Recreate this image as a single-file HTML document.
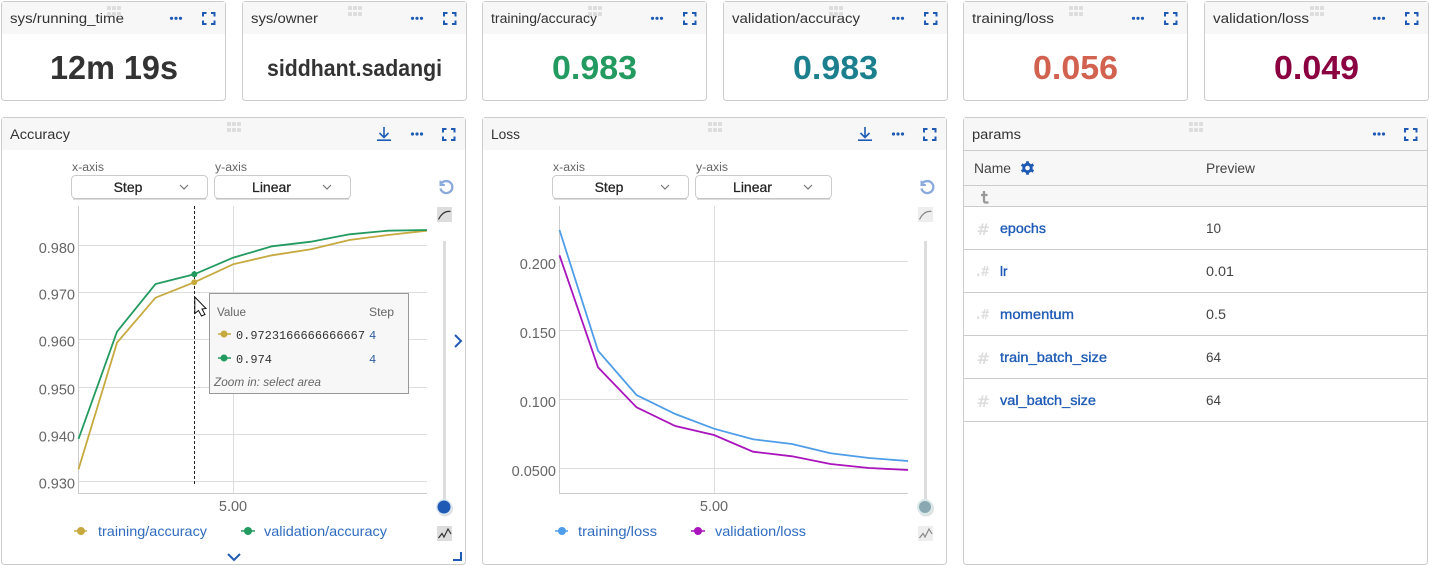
<!DOCTYPE html>
<html lang="en">
<head>
<meta charset="utf-8">
<title>Dashboard</title>
<style>
html,body{margin:0;padding:0;background:#fff;width:1429px;height:566px;overflow:hidden}
svg{display:block}
text{font-family:"Liberation Sans",sans-serif}
.t{font-size:13.5px;fill:#333}
.v{font-size:33px;font-weight:700;text-anchor:middle}
.lab{font-size:11.5px;fill:#666}
.dd{font-size:14px;fill:#222;stroke:#222;stroke-width:.25px;text-anchor:middle}
.ax{font-size:14.5px;fill:#666;text-anchor:end}
.axm{font-size:14.5px;fill:#666;text-anchor:middle}
.leg{font-size:14px;fill:#2f6cc0}
.nm{font-size:13.5px;fill:#1f5bb5;stroke:#1f5bb5;stroke-width:.35px}
.pv{font-size:13.5px;fill:#444}
.hs{font-family:"DejaVu Sans",sans-serif;font-size:16px;font-weight:700;fill:#ddd}
.hd2{font-family:"DejaVu Sans",sans-serif;font-size:13px;font-weight:700;fill:#ddd}
.tt{font-size:11.5px;fill:#666}
.mono{font-family:"Liberation Mono",monospace;font-size:12px;fill:#333}
.card{fill:#fff;stroke:#ccc;stroke-width:1}
.hd{fill:#f7f7f7}
.g{stroke:#ddd;stroke-width:1;fill:none}
.a{stroke:#ccc;stroke-width:1;fill:none}
</style>
</head>
<body>
<svg width="1429" height="566" viewBox="0 0 1429 566" xmlns="http://www.w3.org/2000/svg">
<defs>
<g id="h"><g fill="#ddd"><rect x="0" y="0" width="4" height="4" rx=".8"/><rect x="5" y="0" width="4" height="4" rx=".8"/><rect x="10" y="0" width="4" height="4" rx=".8"/><rect x="0" y="6" width="4" height="4" rx=".8"/><rect x="5" y="6" width="4" height="4" rx=".8"/><rect x="10" y="6" width="4" height="4" rx=".8"/></g></g>
<g id="d"><circle cx="1.5" cy="0" r="1.6" fill="#1f5bb5"/><circle cx="6" cy="0" r="1.6" fill="#1f5bb5"/><circle cx="10.5" cy="0" r="1.6" fill="#1f5bb5"/></g>
<path id="f" d="M1 4.5V1H4.5M9 1H12.5V4.5M12.5 8.5V12H9M4.5 12H1V8.5" fill="none" stroke="#1f5bb5" stroke-width="2"/>
<g id="dl" fill="none" stroke="#1f5bb5" stroke-width="1.6"><path d="M7 0V10M2.5 6L7 10.5L11.5 6"/><path d="M0 13.2H14"/></g>
<path id="cv" d="M0 0L4 4L8 0" fill="none" stroke="#777" stroke-width="1.2"/>
<g id="rs" fill="none" stroke="#8aa9dc" stroke-width="2.3"><path d="M2.5 3.5A6 6 0 1 1 1.5 8.5"/><path d="M1.5 0.8V5H5.8" stroke-width="2"/></g>
</defs>

<!-- small cards -->
<g>
<rect class="card" x="1.5" y="1.5" width="224" height="99" rx="3"/><path class="hd" d="M2 2H225V34H2Z"/>
<text class="t" x="10" y="23" textLength="114" lengthAdjust="spacingAndGlyphs">sys/running_time</text>
<use href="#h" x="107" y="6"/><use href="#d" x="170" y="18.3"/><use href="#f" x="202" y="12"/>
<text class="v" x="114" y="79" fill="#333" textLength="128" lengthAdjust="spacingAndGlyphs">12m 19s</text>
</g>
<g>
<rect class="card" x="242.5" y="1.5" width="224" height="99" rx="3"/><path class="hd" d="M243 2H466V34H243Z"/>
<text class="t" x="251" y="23" textLength="67" lengthAdjust="spacingAndGlyphs">sys/owner</text>
<use href="#h" x="348" y="6"/><use href="#d" x="411" y="18.3"/><use href="#f" x="443" y="12"/>
<text x="354.500" y="76" text-anchor="middle" font-size="23" font-weight="700" fill="#333" textLength="175" lengthAdjust="spacingAndGlyphs">siddhant.sadangi</text>
</g>
<g>
<rect class="card" x="482.500" y="1.5" width="224" height="99" rx="3"/><path class="hd" d="M483 2H706V34H483Z"/>
<text class="t" x="491" y="23" textLength="106" lengthAdjust="spacingAndGlyphs">training/accuracy</text>
<use href="#h" x="588" y="6"/><use href="#d" x="651" y="18.3"/><use href="#f" x="683" y="12"/>
<text class="v" x="594.500" y="79" fill="#239a5f" textLength="85" lengthAdjust="spacingAndGlyphs">0.983</text>
</g>
<g>
<rect class="card" x="723.500" y="1.5" width="224" height="99" rx="3"/><path class="hd" d="M724 2H947V34H724Z"/>
<text class="t" x="732" y="23" textLength="128" lengthAdjust="spacingAndGlyphs">validation/accuracy</text>
<use href="#h" x="829" y="6"/><use href="#d" x="892" y="18.3"/><use href="#f" x="924" y="12"/>
<text class="v" x="835.500" y="79" fill="#1b7f8e" textLength="85" lengthAdjust="spacingAndGlyphs">0.983</text>
</g>
<g>
<rect class="card" x="963.500" y="1.5" width="224" height="99" rx="3"/><path class="hd" d="M964 2H1187V34H964Z"/>
<text class="t" x="972" y="23" textLength="82" lengthAdjust="spacingAndGlyphs">training/loss</text>
<use href="#h" x="1069" y="6"/><use href="#d" x="1132" y="18.3"/><use href="#f" x="1164" y="12"/>
<text class="v" x="1075.500" y="79" fill="#d2624f" textLength="85" lengthAdjust="spacingAndGlyphs">0.056</text>
</g>
<g>
<rect class="card" x="1204.500" y="1.5" width="224" height="99" rx="3"/><path class="hd" d="M1205 2H1428V34H1205Z"/>
<text class="t" x="1213" y="23" textLength="96" lengthAdjust="spacingAndGlyphs">validation/loss</text>
<use href="#h" x="1310" y="6"/><use href="#d" x="1373" y="18.3"/><use href="#f" x="1405" y="12"/>
<text class="v" x="1316.500" y="79" fill="#8b0040" textLength="85" lengthAdjust="spacingAndGlyphs">0.049</text>
</g>

<!-- Accuracy -->
<g>
<rect class="card" x="1.5" y="117.5" width="464" height="447" rx="3"/><path class="hd" d="M2 118H465V150H2Z"/>
<text class="t" x="10" y="139" textLength="60" lengthAdjust="spacingAndGlyphs">Accuracy</text>
<use href="#h" x="227" y="122"/><use href="#dl" x="377" y="127"/><use href="#d" x="411" y="134"/><use href="#f" x="442" y="128"/>
<text class="lab" x="72" y="171" textLength="32" lengthAdjust="spacingAndGlyphs">x-axis</text>
<text class="lab" x="215" y="171" textLength="32" lengthAdjust="spacingAndGlyphs">y-axis</text>
<rect x="71.500" y="175.500" width="136" height="23" rx="4" fill="#fff" stroke="#ccc"/><path d="M73 199H206" stroke="#bbb"/>
<rect x="214.500" y="175.500" width="136" height="23" rx="4" fill="#fff" stroke="#ccc"/><path d="M216 199H349" stroke="#bbb"/>
<text class="dd" x="128" y="192">Step</text><text class="dd" x="271.500" y="192">Linear</text>
<use href="#cv" x="180" y="185"/><use href="#cv" x="323" y="185"/>
<use href="#rs" x="439" y="180"/>
<rect x="437" y="207" width="15" height="15" fill="#ddd"/><path d="M438.500 219.500Q443 210.500 450.500 211.500" fill="none" stroke="#333" stroke-width="1.2"/>
<rect x="443" y="241" width="3" height="266" fill="#ddd"/>
<circle cx="445" cy="508.500" r="8" fill="#ccc" opacity=".6"/><circle cx="444" cy="507" r="8" fill="#dbe8f3"/><circle cx="444" cy="507" r="6.500" fill="#1f5bb5"/>
<rect x="437" y="526" width="15" height="15" fill="#ddd"/><path d="M438.500 538L442 533.500L444 537L448 529L451 534" fill="none" stroke="#333" stroke-width="1.2"/>
<path d="M455 335L461 341L455 347" fill="none" stroke="#1f5bb5" stroke-width="2"/>
<path d="M228 554L234 560L240 554" fill="none" stroke="#1f5bb5" stroke-width="2"/>
<path d="M453 560H461V552" fill="none" stroke="#1f5bb5" stroke-width="2"/>
<path class="g" d="M78.500 245.500H427M78.500 292.500H427M78.500 339.500H427M78.500 387.500H427M78.500 434.500H427M78.500 481.500H427M233.500 206V493"/>
<path class="a" d="M78.500 206V493.500H427"/>
<text class="ax" x="75" y="253">0.980</text><text class="ax" x="75" y="299.500">0.970</text><text class="ax" x="75" y="346.500">0.960</text><text class="ax" x="75" y="394.500">0.950</text><text class="ax" x="75" y="441.500">0.940</text><text class="ax" x="75" y="488.500">0.930</text>
<text class="axm" x="233" y="511">5.00</text>
<path d="M194.500 206V486" stroke="#222" stroke-width="1" stroke-dasharray="3 2" fill="none"/>
<polyline fill="none" stroke="#c6a93f" stroke-width="1.800" points="78.500,469.300 117,342.700 155.500,297.700 194.300,282.300 233,264.300 272,255.300 311,249.300 349.500,240 388,235 427,230.700"/>
<polyline fill="none" stroke="#239a5f" stroke-width="1.800" points="78.500,439 117,331.700 155.500,284 194.300,274.300 233,257.700 272,246.300 311,241.700 349.500,234.300 388,230.700 427,230"/>
<circle cx="194.300" cy="282.300" r="3" fill="#c6a93f"/><circle cx="194.300" cy="274.300" r="3" fill="#239a5f"/>
<rect x="209.500" y="293.500" width="199" height="100" fill="#f7f7f7" stroke="#999"/>
<text class="tt" x="217" y="316" textLength="29" lengthAdjust="spacingAndGlyphs">Value</text><text class="tt" x="369" y="316" textLength="25" lengthAdjust="spacingAndGlyphs">Step</text>
<path d="M218 334H231" stroke="#c6a93f" stroke-width="1.500"/><circle cx="224" cy="334" r="3.500" fill="#c6a93f"/>
<text class="mono" x="236" y="339" textLength="129" lengthAdjust="spacingAndGlyphs">0.9723166666666667</text><text class="mono" x="369" y="339" style="fill:#2f5f9f">4</text>
<path d="M218 358H231" stroke="#239a5f" stroke-width="1.500"/><circle cx="224" cy="358" r="3.500" fill="#239a5f"/>
<text class="mono" x="236" y="363">0.974</text><text class="mono" x="369" y="363" style="fill:#2f5f9f">4</text>
<text x="214" y="386" font-size="11.500" font-style="italic" fill="#666" textLength="107" lengthAdjust="spacingAndGlyphs">Zoom in: select area</text>
<path d="M194.800 297L194.800 313.500L198.500 310.500L201.500 316L205 314.500L202 309L206 308.500Z" fill="#fff" stroke="#111" stroke-width="1"/>
<path d="M74 531H87" stroke="#c6a93f" stroke-width="1.500"/><circle cx="81" cy="531" r="4" fill="#c6a93f"/>
<text class="leg" x="98" y="536" textLength="109" lengthAdjust="spacingAndGlyphs">training/accuracy</text>
<path d="M241 531H255" stroke="#239a5f" stroke-width="1.500"/><circle cx="248" cy="531" r="4" fill="#239a5f"/>
<text class="leg" x="264" y="536" textLength="123" lengthAdjust="spacingAndGlyphs">validation/accuracy</text>
</g>

<!-- Loss -->
<g>
<rect class="card" x="482.500" y="117.500" width="464" height="447" rx="3"/><path class="hd" d="M483 118H946V150H483Z"/>
<text class="t" x="491" y="139" textLength="29" lengthAdjust="spacingAndGlyphs">Loss</text>
<use href="#h" x="708" y="122"/><use href="#dl" x="858" y="127"/><use href="#d" x="892" y="134"/><use href="#f" x="923" y="128"/>
<text class="lab" x="553" y="171" textLength="32" lengthAdjust="spacingAndGlyphs">x-axis</text>
<text class="lab" x="696" y="171" textLength="32" lengthAdjust="spacingAndGlyphs">y-axis</text>
<rect x="552.500" y="175.500" width="136" height="23" rx="4" fill="#fff" stroke="#ccc"/><path d="M554 199H687" stroke="#bbb"/>
<rect x="695.500" y="175.500" width="136" height="23" rx="4" fill="#fff" stroke="#ccc"/><path d="M697 199H830" stroke="#bbb"/>
<text class="dd" x="609" y="192">Step</text><text class="dd" x="752.500" y="192">Linear</text>
<use href="#cv" x="661" y="185"/><use href="#cv" x="804" y="185"/>
<use href="#rs" x="920" y="180"/>
<rect x="918" y="207" width="15" height="15" fill="#eee"/><path d="M919.500 219.500Q924 210.500 931.500 211.500" fill="none" stroke="#888" stroke-width="1.200"/>
<rect x="924" y="241" width="3" height="266" fill="#ddd"/>
<circle cx="926" cy="508.500" r="8" fill="#ccc" opacity=".6"/><circle cx="925" cy="507" r="8" fill="#dbe8ea"/><circle cx="925" cy="507" r="6" fill="#8aa8b2"/>
<rect x="918" y="526" width="15" height="15" fill="#eee"/><path d="M919.500 538L923 533.500L925 537L929 529L932 534" fill="none" stroke="#888" stroke-width="1.200"/>
<path class="g" d="M559.500 261.500H908M559.500 330.500H908M559.500 399.500H908M559.500 468.500H908M714.500 206V493"/>
<path class="a" d="M559.500 206V493.500H908"/>
<text class="ax" x="556" y="269">0.200</text><text class="ax" x="556" y="338">0.150</text><text class="ax" x="556" y="407">0.100</text><text class="ax" x="556" y="476">0.0500</text>
<text class="axm" x="714" y="511">5.00</text>
<polyline fill="none" stroke="#4f9de8" stroke-width="1.800" points="559.500,230 598,350.700 636.500,395 675.300,414 714,428.700 753,439.300 792,444 830.500,453.300 869,458 908,461"/>
<polyline fill="none" stroke="#a914bd" stroke-width="1.800" points="559.500,255.300 598,367.300 636.500,407.300 675.300,426 714,435 753,451.700 792,456.300 830.500,464 869,468 908,470"/>
<path d="M555 531H568" stroke="#4f9de8" stroke-width="1.500"/><circle cx="562" cy="531" r="4" fill="#4f9de8"/>
<text class="leg" x="578" y="536" textLength="79" lengthAdjust="spacingAndGlyphs">training/loss</text>
<path d="M691 531H705" stroke="#a914bd" stroke-width="1.500"/><circle cx="698" cy="531" r="4" fill="#a914bd"/>
<text class="leg" x="715" y="536" textLength="91" lengthAdjust="spacingAndGlyphs">validation/loss</text>
</g>

<!-- params -->
<g>
<rect class="card" x="963.500" y="117.500" width="464" height="447" rx="3"/><path class="hd" d="M964 118H1427V150H964Z"/>
<text class="t" x="972" y="139" textLength="49" lengthAdjust="spacingAndGlyphs">params</text>
<use href="#h" x="1189" y="122"/><use href="#d" x="1373" y="134"/><use href="#f" x="1404" y="128"/>
<rect x="964" y="151" width="463" height="55" fill="#f7f7f7"/>
<path class="a" d="M964 150.500H1427M964 185.500H1427M964 206.500H1427M964 249.500H1427M964 292.500H1427M964 335.500H1427M964 378.500H1427M964 421.500H1427"/>
<text class="pv" x="974" y="173" textLength="37" lengthAdjust="spacingAndGlyphs">Name</text>
<text class="pv" x="1206" y="173" textLength="49" lengthAdjust="spacingAndGlyphs">Preview</text>
<g transform="translate(1027.500 168)"><circle r="5.200" fill="#1f5bb5"/><path d="M0 -6.800V6.800M-5.900 -3.400L5.900 3.400M-5.900 3.400L5.900 -3.400" stroke="#1f5bb5" stroke-width="2.800"/><circle r="2.300" fill="#f7f7f7"/></g>
<path d="M984 191V200.500Q984 202.500 986 202.500H988.500M981 195H987.500" fill="none" stroke="#999" stroke-width="2.300"/>
<text class="hs" x="976.500" y="235">#</text><text class="nm" x="1000" y="233" textLength="46" lengthAdjust="spacingAndGlyphs">epochs</text><text class="pv" x="1206" y="233">10</text>
<text class="hd2" x="976" y="276" textLength="14" lengthAdjust="spacingAndGlyphs">.#</text><text class="nm" x="1000" y="276">lr</text><text class="pv" x="1206" y="276" textLength="28" lengthAdjust="spacingAndGlyphs">0.01</text>
<text class="hd2" x="976" y="319" textLength="14" lengthAdjust="spacingAndGlyphs">.#</text><text class="nm" x="1000" y="319" textLength="74" lengthAdjust="spacingAndGlyphs">momentum</text><text class="pv" x="1206" y="319" textLength="20" lengthAdjust="spacingAndGlyphs">0.5</text>
<text class="hs" x="976.500" y="364">#</text><text class="nm" x="1000" y="362" textLength="107" lengthAdjust="spacingAndGlyphs">train_batch_size</text><text class="pv" x="1206" y="362">64</text>
<text class="hs" x="976.500" y="407">#</text><text class="nm" x="1000" y="405" textLength="96" lengthAdjust="spacingAndGlyphs">val_batch_size</text><text class="pv" x="1206" y="405">64</text>
</g>
</svg>
</body>
</html>
